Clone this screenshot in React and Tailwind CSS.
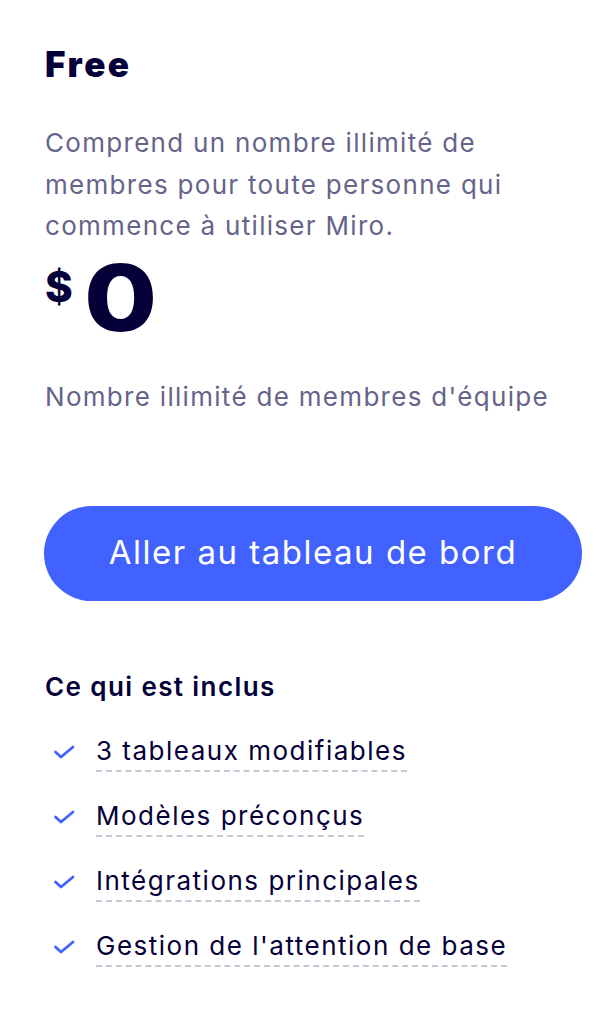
import React from "react";

const items = [
  "3 tableaux modifiables",
  "Modèles préconçus",
  "Intégrations principales",
  "Gestion de l'attention de base",
];

function Check() {
  return (
    <svg width="22" height="14" viewBox="0 0 22 14" fill="none" className="shrink-0">
      <path d="M2.5 7 L8 12 L20 2" stroke="#4262ff" strokeWidth="2.8" strokeLinecap="round" strokeLinejoin="round" />
    </svg>
  );
}

export default function App() {
  return (
    <div className="min-h-[1034px] w-[616px] bg-white pl-[45px] pr-[34px] pt-[38px]" style={{ fontFamily: "Inter, 'Noto Sans', sans-serif" }}>
      <h2 className="text-[35px] font-black leading-[52px] tracking-[2.5px] text-[#050038]">Free</h2>
      <p className="mt-[32px] text-[26px] leading-[41.5px] tracking-[1.3px] text-[#65648a]">
        Comprend un nombre illimité de membres pour toute personne qui commence à utiliser Miro.
      </p>
      <div className="mt-[11px] flex items-start text-[#050038]">
        <span className="mt-[9px] text-[42px] font-extrabold leading-[40px]">$</span>
        <span className="ml-[11px] origin-left scale-x-115 text-[92px] font-extrabold leading-[80px]">0</span>
      </div>
      <p className="mt-[39px] text-[26px] leading-[40px] tracking-[1.3px] text-[#65648a]">Nombre illimité de membres d'équipe</p>
      <button className="mt-[89px] flex h-[95px] w-[538px] -ml-[1px] items-center justify-center rounded-full bg-[#4262ff] text-[33px] font-normal tracking-[1.5px] text-white">
        Aller au tableau de bord
      </button>
      <h3 className="mt-[71px] text-[26px] font-semibold leading-[30px] tracking-[1.4px] text-[#050038]">Ce qui est inclus</h3>
      <ul className="mt-[30px] flex flex-col gap-[25px]">
        {items.map((t) => (
          <li key={t} className="flex items-center">
            <span className="ml-[8px] mr-[21px] flex">
              <Check />
            </span>
            <span className="border-b-2 border-dashed border-[#c7c7d6] text-[26px] leading-[38px] tracking-[1.5px] text-[#050038]">{t}</span>
          </li>
        ))}
      </ul>
    </div>
  );
}
